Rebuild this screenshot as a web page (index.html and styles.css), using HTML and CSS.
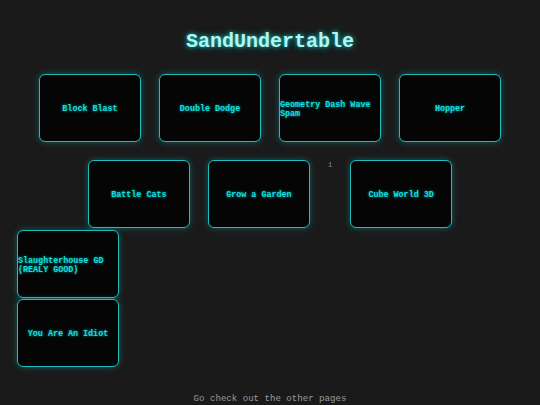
FILE: index.html
```html
<!DOCTYPE html>
<html>
<head>
<meta charset="utf-8">
<title>SandUndertable</title>
<link rel="stylesheet" href="styles.css">
</head>
<body>
<h1 class="title">SandUndertable</h1>
<div class="grid">
  <a class="card" href="#">Block Blast</a>
  <a class="card" href="#">Double Dodge</a>
  <a class="card" href="#">Geometry Dash Wave Spam</a>
  <a class="card" href="#">Hopper</a>
  <a class="card" href="#">Battle Cats</a>
  <a class="card" href="#">Grow a Garden</a>
  <span class="stray">1</span>
  <a class="card" href="#">Cube World 3D</a>
</div>
<div class="column">
  <a class="card" href="#">Slaughterhouse GD (REALY GOOD)</a>
  <a class="card" href="#">You Are An Idiot</a>
</div>
<p class="footer">Go check out the other pages</p>
</body>
</html>
```
FILE: styles.css
```css
html, body {
  margin: 0;
  padding: 0;
}
body {
  background: #1a1a1a;
  font-family: "Liberation Mono", "Courier New", monospace;
  height: 405px;
  overflow: hidden;
}
.title {
  margin: 30px 0 0;
  font-size: 20px;
  line-height: 24px;
  font-weight: bold;
  text-align: center;
  color: #b4f4f2;
  text-shadow: 0 0 4px rgba(0, 255, 255, 0.7), 0 0 8px rgba(0, 200, 200, 0.4);
}
.grid {
  width: 472px;
  margin: 20px auto 0;
  display: flex;
  flex-wrap: wrap;
  justify-content: center;
  gap: 18px;
}
.card {
  box-sizing: border-box;
  width: 102px;
  height: 68px;
  padding-top: 4px;
  background: #050505;
  border: 1px solid #1fbcbc;
  border-radius: 6px;
  box-shadow: 0 0 6px rgba(0, 220, 220, 0.35);
  display: flex;
  align-items: center;
  justify-content: center;
  color: #12e0e0;
  font-size: 8.4px;
  line-height: 9.5px;
  font-weight: bold;
  text-decoration: none;
  text-shadow: 0 0 3px rgba(0, 255, 255, 0.6);
}
.stray {
  font-size: 7px;
  line-height: 8px;
  color: #8a8a8a;
  align-self: flex-start;
  margin-top: 1px;
}
.column {
  display: flex;
  flex-direction: column;
  gap: 1px;
  margin: 2px 0 0 17px;
}
.footer {
  margin: 26px 0 0;
  text-align: center;
  font-size: 9.1px;
  line-height: 11px;
  color: #9a9a9a;
}
```
